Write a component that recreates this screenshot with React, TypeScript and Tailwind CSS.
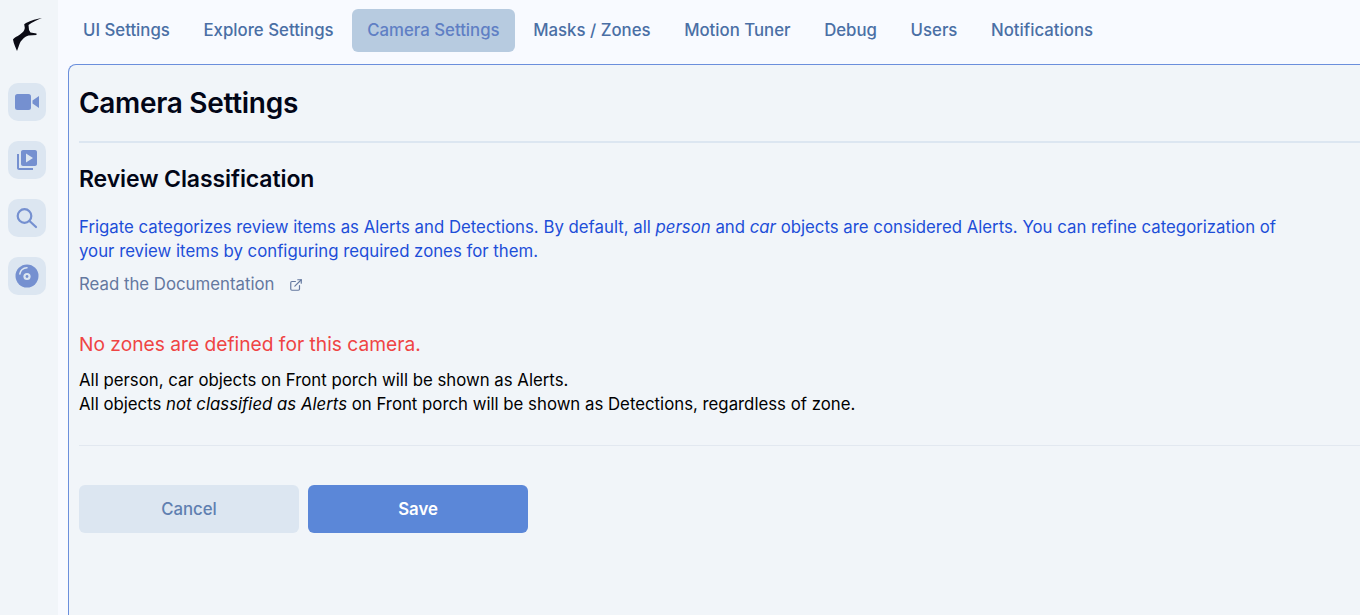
import React from "react";

const tabs = ["UI Settings", "Explore Settings", "Camera Settings", "Masks / Zones", "Motion Tuner", "Debug", "Users", "Notifications"];

function Bird() {
  return (
    <svg width="34" height="38" viewBox="10 15 34 38" className="block">
      <path d="M42 18 C37 20 32 22 28.5 25 L29 30 L30.5 32.5 L36.5 33.5 L36.5 35 L28.5 35.5 L26 36.5 C23 38.5 20.5 41 19.5 44 L17 51 C15.5 47 13.8 44 13 39.5 C14 37.5 17 36.8 20 34.5 C22.5 32.5 24.5 31 24.8 28 L24.2 24.2 L26 23 C31 20.5 37 18.8 42 18 Z" fill="#0a0a14" />
    </svg>
  );
}

function NavIcon({ children }: { children: React.ReactNode }) {
  return <div className="w-[38px] h-[38px] rounded-[10px] bg-[#dce6f1] flex items-center justify-center">{children}</div>;
}

export default function App() {
  return (
    <div className="w-[1360px] h-[615px] overflow-hidden flex bg-[#f8faff] text-black font-['Inter',sans-serif]">
      <aside className="w-[58px] shrink-0 bg-[#f1f5f9] flex flex-col items-start pl-[8px]">
        <div className="mt-[15px] ml-[2px]"><Bird /></div>
        <div className="mt-[30px] flex flex-col items-center gap-[20px]">
          <NavIcon>
            <svg width="24" height="24" viewBox="0 0 24 24" fill="#7590d0"><rect x="0" y="4" width="16" height="16" rx="2.5" /><path d="M17.5 10.5 L24 6 V18 L17.5 13.5 Z" /></svg>
          </NavIcon>
          <NavIcon>
            <svg width="24" height="24" viewBox="0 0 24 24" fill="#7590d0"><path d="M2 6H4V20H18V22H4C2.9 22 2 21.1 2 20V6Z" /><path fillRule="evenodd" d="M8 2H20C21.1 2 22 2.9 22 4V16C22 17.1 21.1 18 20 18H8C6.9 18 6 17.1 6 16V4C6 2.9 6.9 2 8 2ZM11 5.5V14.5L18 10L11 5.5Z" /></svg>
          </NavIcon>
          <NavIcon>
            <svg width="24" height="24" viewBox="0 0 24 24" fill="none" stroke="#7590d0" strokeWidth="2.2" strokeLinecap="round"><circle cx="9.5" cy="10" r="6.8" /><path d="M14.5 15 L21 21" /></svg>
          </NavIcon>
          <NavIcon>
            <svg width="24" height="24" viewBox="0 0 24 24"><circle cx="12" cy="12" r="11.5" fill="#7590d0" /><circle cx="12" cy="12.5" r="3.6" fill="#dce6f1" /><circle cx="12" cy="12.5" r="1.4" fill="#7590d0" /><path d="M4.8 10 C5.5 6.5 8.5 4 12 3.8" fill="none" stroke="#dce6f1" strokeWidth="1.5" strokeLinecap="round" /></svg>
          </NavIcon>
        </div>
      </aside>
      <main className="flex-1 min-w-0 flex flex-col">
        <nav className="h-[64px] shrink-0 pl-[10px] pt-[9px] flex items-start gap-[3.6px]">
          {tabs.map((t) => (
            <div key={t} className={`h-[43px] px-[15px] flex items-center rounded-md text-[16.8px] font-medium whitespace-nowrap ${t === "Camera Settings" ? "bg-[#b7cbe0] text-[#5f7fc4]" : "text-[#4a6fa5]"}`}>{t}</div>
          ))}
        </nav>
        <section className="flex-1 ml-[10px] border-l border-t border-[#6b8fdc] rounded-tl-lg bg-[#f1f5f9] pl-[10px]">
          <h1 className="mt-[20px] text-[28px] leading-[36px] font-semibold text-[#020617] tracking-[-0.3px]">Camera Settings</h1>
          <hr className="mt-[20px] border-0 h-[2px] bg-[#dce6f1]" />
          <h2 className="mt-[20px] text-[23px] leading-[32px] font-semibold text-[#020617] tracking-[-0.1px]">Review Classification</h2>
          <p className="mt-[20px] w-[1210px] text-[16.8px] leading-[24px] text-[#1d4ed8]">
            Frigate categorizes review items as Alerts and Detections. By default, all <em>person</em> and <em>car</em> objects are considered Alerts. You can refine categorization of your review items by configuring required zones for them.
          </p>
          <div className="mt-[10px] flex items-center h-[24px] text-[16.8px] text-[#64789f]">
            <span>Read the Documentation</span>
            <svg className="ml-[15px]" width="14" height="14" viewBox="0 0 24 24" fill="none" stroke="#64789f" strokeWidth="2" strokeLinecap="round" strokeLinejoin="round"><path d="M15 3h6v6" /><path d="M10 14 21 3" /><path d="M18 13v6a2 2 0 0 1-2 2H5a2 2 0 0 1-2-2V8a2 2 0 0 1 2-2h6" /></svg>
          </div>
          <p className="mt-[33px] text-[19.2px] leading-[28px] text-[#ef4444]">No zones are defined for this camera.</p>
          <div className="mt-[10px] text-[16.8px] leading-[24px] text-black">
            <div>All person, car objects on Front porch will be shown as Alerts.</div>
            <div>All objects <em>not classified as Alerts</em> on Front porch will be shown as Detections, regardless of zone.</div>
          </div>
          <hr className="mt-[29px] border-0 h-px bg-[#e2e8f0]" />
          <div className="mt-[39px] flex gap-[9px]">
            <button className="w-[220px] h-[48px] pt-[2px] rounded-md bg-[#dce6f1] text-[16.8px] font-medium text-[#5f7fb0]">Cancel</button>
            <button className="w-[220px] h-[48px] pt-[2px] rounded-md bg-[#5b87d8] text-[16.8px] font-semibold text-white">Save</button>
          </div>
        </section>
      </main>
    </div>
  );
}
